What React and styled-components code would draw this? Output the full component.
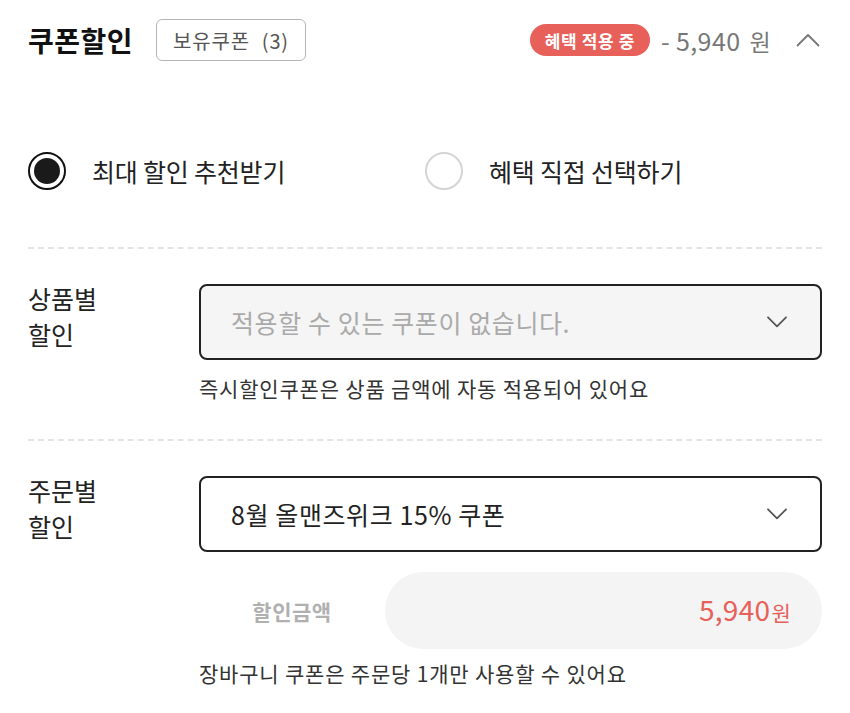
import React, { useState } from "react";
import styled, { createGlobalStyle } from "styled-components";

const GlobalStyle = createGlobalStyle`
  body {
    margin: 0;
    background: #fff;
    font-family: "Noto Sans CJK KR", "Noto Sans", sans-serif;
    color: #222;
  }
`;

const Page = styled.div`
  width: 850px;
  padding: 19px 28px 0;
  box-sizing: border-box;
  display: flex;
  flex-direction: column;
`;

//! Header
const Header = styled.div`
  display: flex;
  align-items: center;
  height: 42px;
`;

const Title = styled.h2`
  margin: 0;
  font-size: 28px;
  font-weight: 700;
  letter-spacing: 0.5px;
  color: #111;
`;

const OwnedBadge = styled.div`
  margin-left: 23px;
  height: 42px;
  padding: 0 16px;
  box-sizing: border-box;
  display: flex;
  align-items: center;
  border: 1.5px solid #b5b5b5;
  border-radius: 6px;
  font-size: 20px;
  letter-spacing: 0.8px;
  color: #555;
  gap: 12px;
`;

const HeaderRight = styled.div`
  margin-left: auto;
  display: flex;
  align-items: center;
`;

const AppliedPill = styled.span`
  height: 32px;
  padding: 0 15px;
  display: flex;
  align-items: center;
  border-radius: 16px;
  background: #e8605a;
  color: #fff;
  font-size: 17px;
  font-weight: 700;
  letter-spacing: 0.6px;
`;

const TotalDiscount = styled.span`
  margin-left: 11px;
  font-size: 25px;
  color: #777;
  display: flex;
  align-items: baseline;
  gap: 9px;
  letter-spacing: 0.4px;
  span {
    font-size: 23px;
  }
`;

const Chevron = ({ up, color = "#555", width = 24, height = 14, stroke = 2 }) => (
  <svg width={width} height={height} viewBox="0 0 24 14" fill="none">
    <path
      d={up ? "M1.5 12.5 L12 2 L22.5 12.5" : "M1.5 1.5 L12 12 L22.5 1.5"}
      stroke={color}
      strokeWidth={stroke}
      strokeLinecap="round"
      strokeLinejoin="round"
      vectorEffect="non-scaling-stroke"
    />
  </svg>
);

const ToggleButton = styled.button`
  margin-left: 25px;
  margin-right: 2px;
  border: none;
  background: none;
  padding: 0;
  display: flex;
`;

//! Radios
const RadioGroup = styled.div`
  display: flex;
  margin-top: 91px;
`;

const RadioOption = styled.label`
  display: flex;
  align-items: center;
  gap: 26px;
  width: 397px;
  font-size: 25px;
  color: #222;
  letter-spacing: -0.2px;
  cursor: pointer;
`;

const RadioCircle = styled.span`
  width: 38px;
  height: 38px;
  box-sizing: border-box;
  border-radius: 50%;
  border: ${(p) => (p.checked ? "2.5px solid #111" : "2px solid #d4d4d4")};
  display: flex;
  align-items: center;
  justify-content: center;
  &::after {
    content: "";
    display: ${(p) => (p.checked ? "block" : "none")};
    width: 26px;
    height: 26px;
    border-radius: 50%;
    background: #1a1a1a;
  }
`;

const Divider = styled.hr`
  margin: ${(p) => p.top}px 0 0;
  border: none;
  border-top: 2px dashed #e4e4e4;
`;

//! Coupon rows
const CouponRow = styled.div`
  display: flex;
  margin-top: 35px;
`;

const RowLabel = styled.div`
  width: 171px;
  flex-shrink: 0;
  font-size: 25px;
  line-height: 36px;
  margin-top: -4px;
  color: #222;
`;

const RowBody = styled.div`
  flex: 1;
  display: flex;
  flex-direction: column;
`;

const SelectBox = styled.div`
  height: 76px;
  box-sizing: border-box;
  border: 2px solid #222;
  border-radius: 8px;
  background: ${(p) => (p.disabled ? "#f5f5f5" : "#fff")};
  display: flex;
  align-items: center;
  padding: 0 32px 0 30px;
  font-size: 25px;
  color: ${(p) => (p.disabled ? "#aaa" : "#222")};
  letter-spacing: 0.6px;
  span {
    flex: 1;
  }
`;

const Hint = styled.p`
  margin: ${(p) => p.top}px 0 0;
  font-size: 21px;
  line-height: 28px;
  color: #333;
  letter-spacing: 0.8px;
`;

const AmountRow = styled.div`
  display: flex;
  align-items: center;
  margin-top: 20px;
`;

const AmountLabel = styled.div`
  width: 186px;
  text-align: center;
  font-size: 21px;
  font-weight: 700;
  letter-spacing: 0.5px;
  color: #b0b0b0;
`;

const AmountValue = styled.div`
  flex: 1;
  height: 77px;
  border-radius: 38px;
  background: #f4f4f4;
  display: flex;
  align-items: baseline;
  justify-content: flex-end;
  padding: 0 31px 0 0;
  line-height: 75px;
  color: #e8605a;
  font-size: 28px;
  letter-spacing: 0.3px;
  span {
    font-size: 21px;
    margin-left: 1px;
  }
`;

const App = () => {
  const [mode, setMode] = useState("best");

  return (
    <Page>
      <GlobalStyle />
      <Header>
        <Title>쿠폰할인</Title>
        <OwnedBadge>
          보유쿠폰 <span>(3)</span>
        </OwnedBadge>
        <HeaderRight>
          <AppliedPill>혜택 적용 중</AppliedPill>
          <TotalDiscount>
            - 5,940 <span>원</span>
          </TotalDiscount>
          <ToggleButton>
            <Chevron up color="#777" stroke={1.8} />
          </ToggleButton>
        </HeaderRight>
      </Header>

      <RadioGroup>
        <RadioOption onClick={() => setMode("best")}>
          <RadioCircle checked={mode === "best"} />
          최대 할인 추천받기
        </RadioOption>
        <RadioOption onClick={() => setMode("manual")}>
          <RadioCircle checked={mode === "manual"} />
          혜택 직접 선택하기
        </RadioOption>
      </RadioGroup>

      <Divider top={57} />

      <CouponRow>
        <RowLabel>
          상품별
          <br />
          할인
        </RowLabel>
        <RowBody>
          <SelectBox disabled>
            <span>적용할 수 있는 쿠폰이 없습니다.</span>
            <Chevron color="#555" width={22} height={12} stroke={1.8} />
          </SelectBox>
          <Hint top={14}>즉시할인쿠폰은 상품 금액에 자동 적용되어 있어요</Hint>
        </RowBody>
      </CouponRow>

      <Divider top={37} />

      <CouponRow>
        <RowLabel>
          주문별
          <br />
          할인
        </RowLabel>
        <RowBody>
          <SelectBox>
            <span>8월 올맨즈위크 15% 쿠폰</span>
            <Chevron color="#555" width={22} height={12} stroke={1.8} />
          </SelectBox>
          <AmountRow>
            <AmountLabel>할인금액</AmountLabel>
            <AmountValue>
              5,940<span>원</span>
            </AmountValue>
          </AmountRow>
          <Hint top={10}>장바구니 쿠폰은 주문당 1개만 사용할 수 있어요</Hint>
        </RowBody>
      </CouponRow>
    </Page>
  );
};

export default App;
